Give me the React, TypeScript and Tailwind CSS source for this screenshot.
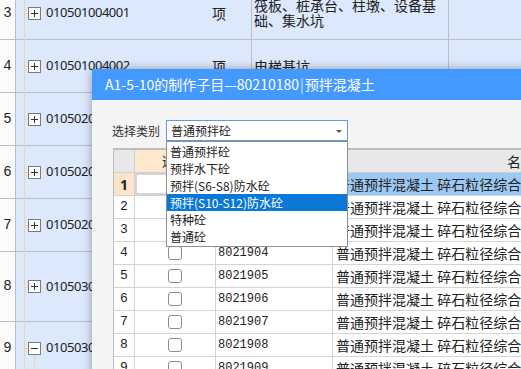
import React from "react";

const rows = [
  { n: "3", code: "010501004001", unit: "项", desc: ["筏板、桩承台、柱墩、设备基", "础、集水坑"], h: "h-[53px]", open: false },
  { n: "4", code: "010501004002", unit: "项", desc: ["电梯基坑"], h: "h-[53px]", open: false },
  { n: "5", code: "010502001001", unit: "m3", desc: ["矩形柱"], h: "h-[53px]", open: false },
  { n: "6", code: "010502002001", unit: "m3", desc: ["构造柱"], h: "h-[53px]", open: false },
  { n: "7", code: "010502003001", unit: "m3", desc: ["异形柱"], h: "h-[53px]", open: false },
  { n: "8", code: "010503001001", unit: "m3", desc: ["基础梁"], h: "h-[70px]", open: false },
  { n: "9", code: "010503002001", unit: "m3", desc: ["矩形梁"], h: "h-[53px]", open: true },
];

const options = ["普通预拌砼", "预拌水下砼", "预拌(S6-S8)防水砼", "预拌(S10-S12)防水砼", "特种砼", "普通砼"];

const items = [1, 2, 3, 4, 5, 6, 7, 8, 9];

function TreeBox({ open }: { open: boolean }) {
  return (
    <div className="w-[13px] h-[13px] border border-[#7a7a7a] bg-white flex items-center justify-center relative">
      <div className="absolute w-[7px] h-px bg-[#333]" />
      {!open && <div className="absolute w-px h-[7px] bg-[#333]" />}
    </div>
  );
}

export default function App() {
  return (
    <div className="relative w-[521px] h-[369px] overflow-hidden bg-white font-['Noto_Sans_CJK_SC',sans-serif] text-[#222]">
      {/* background grid */}
      <div className="flex flex-col mt-[-13px]">
        {rows.map((r) => (
          <div key={r.n} className={`flex border-b border-[#bdbdc4] ${r.h}`}>
            <div className="w-[16px] flex-shrink-0 border-r border-[#bdbdc4] bg-[#fbfbfb] flex items-center justify-center font-['Liberation_Mono',monospace] text-[14px]">
              {r.n}
            </div>
            <div className="w-[171px] flex-shrink-0 bg-[#dce8fc] relative flex items-center pl-[12px]">
              <div className="absolute left-[8px] top-0 bottom-[-1px] w-px bg-[#f1d3a6]" />
              <div className="absolute left-[8px] top-1/2 w-[4px] h-px bg-[#f1d3a6]" />
              {r.open && <div className="absolute left-[18px] top-[32px] bottom-[-1px] w-px bg-[#f1d3a6]" />}
              <TreeBox open={r.open} />
              <span className="ml-[5px] text-[13px] tracking-[-0.45px] font-['Noto_Sans',sans-serif]">{r.code}</span>
            </div>
            <div className="w-[65px] flex-shrink-0 bg-[#dce8fc] border-r border-[#bdbdc4] flex items-center justify-center text-[14px]">
              {r.unit}
            </div>
            <div className="w-[197px] flex-shrink-0 bg-[#dce8fc] border-r border-[#bdbdc4] flex flex-col justify-center pl-[2px] text-[14px] leading-[15px]">
              {r.desc.map((d) => (
                <span key={d} className="whitespace-nowrap">{d}</span>
              ))}
            </div>
            <div className="flex-1 bg-[#dce8fc]" />
          </div>
        ))}
      </div>

      {/* dialog */}
      <div className="absolute left-[92px] top-[69px] w-[700px] h-[340px] bg-[#f4f4f4] shadow-[0_0_9px_rgba(0,0,0,0.35)] flex flex-col">
        <div className="h-[31px] bg-[#4499ff] flex items-center pl-[13px] text-white text-[14px]">
          A1-5-10的制作子目—80210180<span className="text-[#d6e7ff] mx-px">|</span>预拌混凝土
        </div>

        <div className="flex items-center pl-[20px] pt-[20px]">
          <span className="w-[54px] text-[12px] text-[#333]">选择类别</span>
          <div className="relative w-[182px] h-[21px] bg-white border border-[#5b9ce6] flex items-center pl-[4px] text-[12px]">
            普通预拌砼
            <svg className="absolute right-[5px] top-[9px]" width="6" height="4" viewBox="0 0 6 4">
              <path d="M0 0h6L3 3z" fill="#555" />
            </svg>
            {/* dropdown list */}
            <div className="absolute left-[-1px] top-[20px] w-[182px] bg-white border border-[#8f8f8f] z-10 flex flex-col py-px">
              {options.map((o, i) => (
                <div
                  key={o}
                  className={`h-[17px] flex items-center pl-[3px] text-[12px] ${i === 3 ? "bg-[#0a78d7] text-white" : "text-[#222]"}`}
                >
                  {o}
                </div>
              ))}
            </div>
          </div>
        </div>

        {/* inner table */}
        <div className="ml-[21px] mt-[7px] border-l border-t-2 border-[#bdbdbd] flex flex-col bg-white">
          <div className="flex h-[23px] border-b border-[#cfcfcf] bg-[#e8e8e8] text-[13px]">
            <div className="w-[21px] flex-shrink-0 border-r border-[#cfcfcf]" />
            <div className="w-[81px] flex-shrink-0 border-r border-[#cfcfcf] bg-[#fde8cf] flex items-center justify-center">选择</div>
            <div className="w-[117px] flex-shrink-0 border-r border-[#cfcfcf] flex items-center justify-center">编码</div>
            <div className="w-[376px] flex-shrink-0 flex items-center justify-center text-[14px]">名称</div>
          </div>
          {items.map((i) => (
            <div key={i} className="flex h-[23px] border-b border-[#d4d4d4]">
              <div
                className={`w-[21px] flex-shrink-0 border-r border-[#d4d4d4] flex items-center justify-center ${i === 1 ? "bg-[#fde4c8] font-bold text-[14px] font-['Noto_Sans',sans-serif]" : "text-[13px] font-['Liberation_Mono',monospace]"}`}
              >
                {i}
              </div>
              <div
                className={`w-[81px] flex-shrink-0 border-r border-[#d4d4d4] flex items-center justify-center ${i === 1 ? "border-2 border-[#2f72cf] bg-white" : ""}`}
              >
                {i !== 1 && <div className="w-[14px] h-[14px] rounded-[3px] border border-[#8c8c8c] bg-white" />}
              </div>
              <div
                className={`w-[117px] flex-shrink-0 border-r border-[#d4d4d4] flex items-center pl-[2px] text-[12px] font-['Liberation_Mono',monospace] ${i === 1 ? "bg-[#9cc9f3]" : ""}`}
              >
                {`802190${i}`}
              </div>
              <div
                className={`w-[376px] flex-shrink-0 flex items-center pl-[3px] text-[14px] whitespace-nowrap ${i === 1 ? "bg-[#9cc9f3]" : ""}`}
              >
                普通预拌混凝土 碎石粒径综合考虑 C15
              </div>
            </div>
          ))}
        </div>
      </div>
    </div>
  );
}
